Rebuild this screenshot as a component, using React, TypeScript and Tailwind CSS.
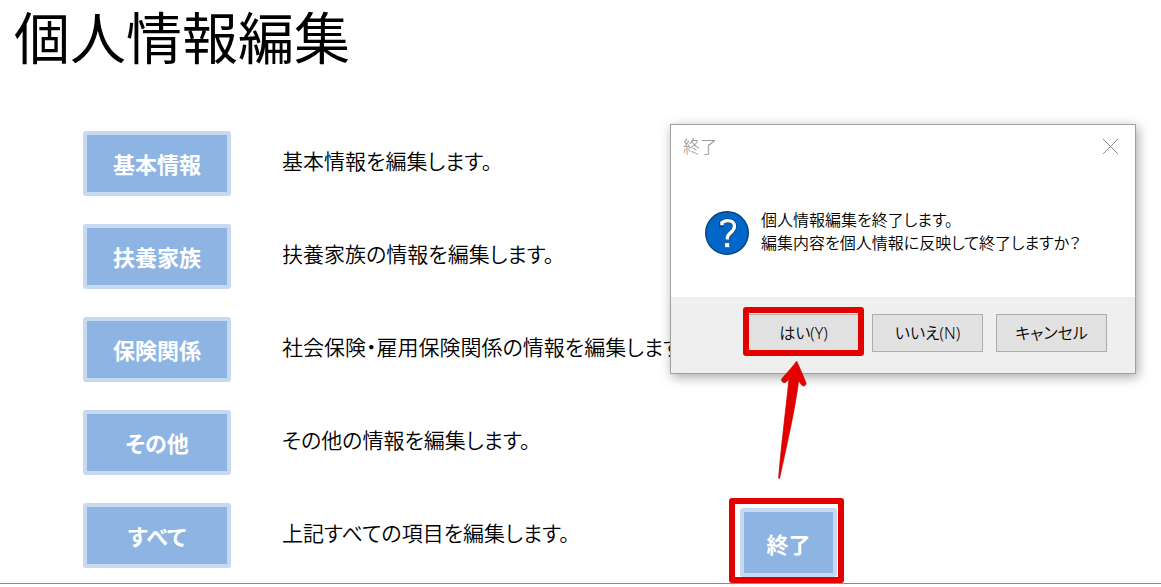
import type { FC } from "react"

const MENU_ITEMS = [
  { id: "basic", label: "基本情報", description: "基本情報を編集します。" },
  { id: "family", label: "扶養家族", description: "扶養家族の情報を編集します。" },
  { id: "insurance", label: "保険関係", description: "社会保険・雇用保険関係の情報を編集します。" },
  { id: "other", label: "その他", description: "その他の情報を編集します。" },
  { id: "all", label: "すべて", description: "上記すべての項目を編集します。" },
]

const DIALOG_BUTTON = "h-[38px] w-[111px] border border-[#adadad] bg-[#e1e1e1] text-base font-[350] text-black"

const Menu: FC = () => (
  <ul className="flex flex-col gap-7 pb-[15px]">
    {MENU_ITEMS.map(item => (
      <li key={item.id} className="flex items-center gap-[51px]">
        <button
          type="button"
          aria-describedby={item.id}
          className="h-[65px] w-[148px] shrink-0 rounded-[3px] border-4 border-[#c6d9f1] bg-[#8eb4e3] text-[22px] leading-none font-bold text-white"
        >
          {item.label}
        </button>
        <p id={item.id} className="pb-1.5 text-[21px] leading-8 font-[350] whitespace-nowrap">
          {item.description}
        </p>
      </li>
    ))}
  </ul>
)

const QuestionIcon: FC = () => (
  <svg className="size-11 shrink-0" viewBox="0 0 44 44" aria-hidden="true">
    <circle cx="22" cy="22" r="21.3" fill="#0067c8" stroke="#0b447c" strokeWidth="1.4" />
    <path
      d="M16.4 16.3V11.4C18.3 10.1 20.2 9.5 22.7 9.5C27 9.5 29.7 11.7 29.7 15.2C29.7 18.2 28.2 19.9 25.7 21.9C23.8 23.5 23.1 24.6 23.1 26.8V28.6"
      fill="none"
      stroke="#0b447c"
      strokeWidth="4.6"
    />
    <path
      d="M17 14.2V11.6C18.6 10.3 20.4 9.6 22.7 9.6C26.9 9.6 29.5 11.8 29.5 15.2C29.5 18.2 28 19.8 25.5 21.8C23.3 23.6 22.4 24.8 22.4 27V28.4"
      fill="none"
      stroke="#fff"
      strokeWidth="3.4"
    />
    <rect x="19.8" y="31.8" width="4.8" height="4.8" fill="#fff" stroke="#0b447c" strokeWidth=".6" />
  </svg>
)

const Arrow: FC = () => (
  <svg
    className="pointer-events-none absolute top-[235px] left-[105px] h-[122px] w-8"
    viewBox="0 0 32 122"
    aria-hidden="true"
  >
    <path
      d="M20.7 1.2C23 6.5 27 15 30 23C30.3 26 26.7 27 25.3 24.5L22.7 20.5C18.5 53 10 88 3.6 118.5L2.6 118C5 88 9.5 52 13 19L10 22.2C7.5 23.5 4.5 21.3 6 18.5C11.5 12 16.5 7 20.7 1.2Z"
      fill="#e50000"
      stroke="#c40000"
      strokeWidth=".7"
    />
  </svg>
)

const ExitDialog: FC = () => (
  <div
    role="dialog"
    aria-labelledby="dialog-title"
    className="absolute top-[124px] right-[25px] w-[466px] border border-[#a0a0a0] bg-white shadow-[2px_3px_11px_rgba(0,0,0,0.35)]"
  >
    <header className="flex h-11 items-center justify-between pr-4 pl-3">
      <h2 id="dialog-title" className="text-[17px] font-light text-[#8a8a8a]">終了</h2>
      <button type="button" aria-label="閉じる">
        <svg className="size-4" viewBox="0 0 16 16" fill="none" stroke="#8c8c8c" aria-hidden="true">
          <path d="M0 0L15 15M15 0L0 15" />
        </svg>
      </button>
    </header>
    <div className="flex h-32 items-center gap-3 pl-[34px]">
      <QuestionIcon />
      <p className="pb-0.5 text-base leading-[23px] font-[350] whitespace-nowrap">
        個人情報編集を終了します。
        <br />
        編集内容を個人情報に反映して終了しますか？
      </p>
    </div>
    <footer className="flex justify-end gap-[13px] bg-[#efefef] pt-[17px] pr-7 pb-[21px]">
      <div className="relative">
        <button type="button" className={DIALOG_BUTTON}>はい(Y)</button>
        <span className="pointer-events-none absolute -inset-x-[5px] -top-[7px] -bottom-1 rounded-[3px] border-6 border-[#e50000]" />
      </div>
      <button type="button" className={DIALOG_BUTTON}>いいえ(N)</button>
      <button type="button" className={DIALOG_BUTTON}>キャンセル</button>
    </footer>
    <Arrow />
  </div>
)

const App: FC = () => (
  <div className="relative overflow-hidden bg-white font-['Noto_Sans','Noto_Sans_CJK_JP',sans-serif] text-black [font-feature-settings:'palt']">
    <h1 className="h-[131px] pl-3.5 text-[56px] leading-[74px]">個人情報編集</h1>
    <main className="flex items-end justify-between border-b border-[#8c8c8c] pr-[317px] pl-[83px]">
      <Menu />
      <div className="rounded-[3px] border-6 border-[#e50000] pt-1 pr-px pl-[5px]">
        <button
          type="button"
          className="block h-[69px] w-[97px] rounded-[3px] border-4 border-[#c6d9f1] bg-[#8eb4e3] pt-0.5 text-[22px] leading-none font-bold text-white"
        >
          終了
        </button>
      </div>
    </main>
    <ExitDialog />
  </div>
)

export default App
